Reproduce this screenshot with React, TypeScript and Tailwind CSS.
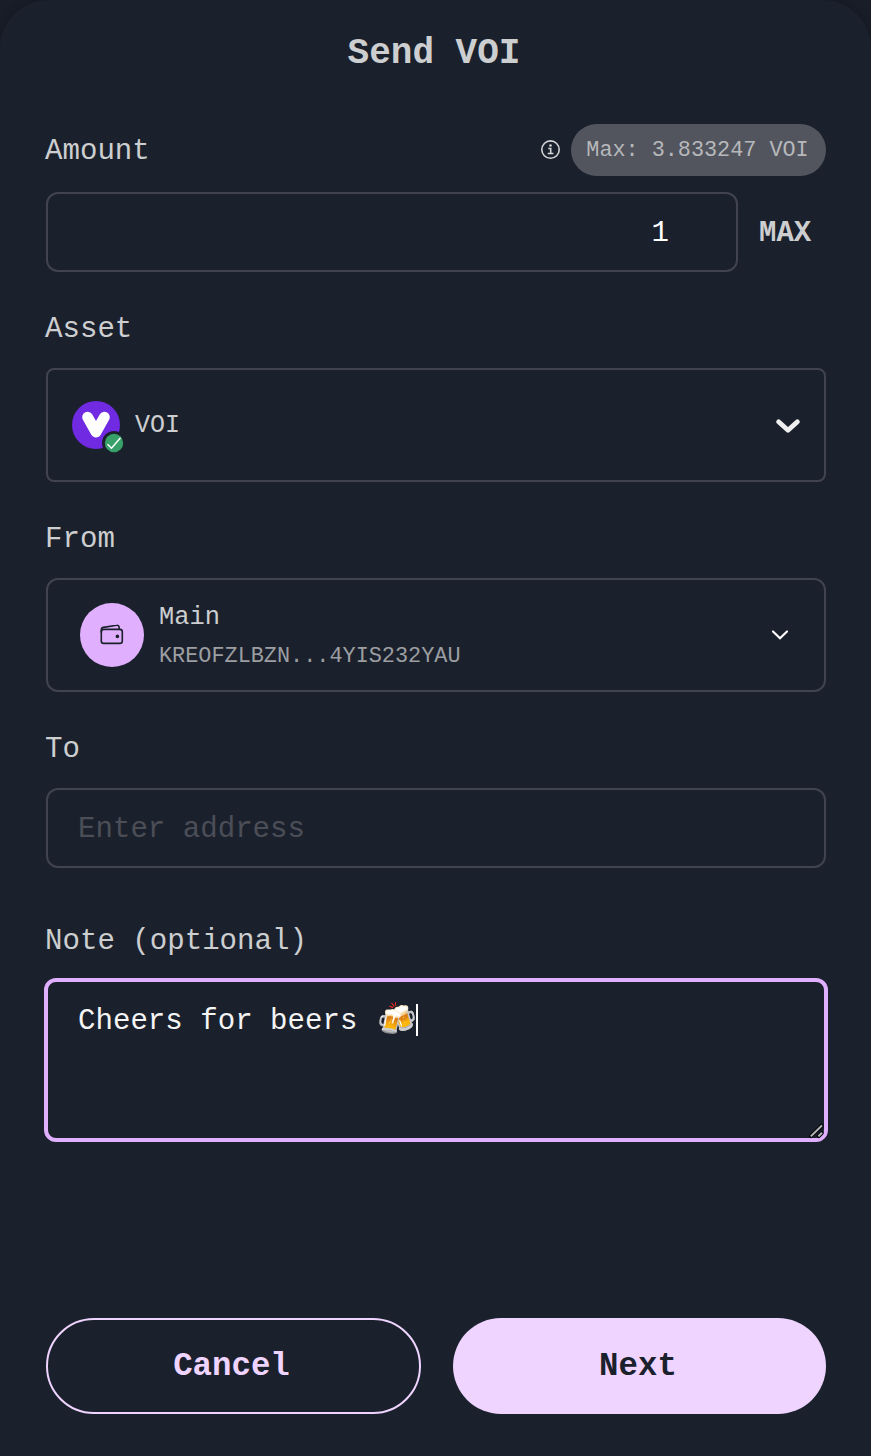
import type { ReactNode } from "react";

function Label({ children }: { children: ReactNode }) {
  return <span className="-ml-px pt-0.5 text-[29.1px] leading-9">{children}</span>;
}

function VoiLogo() {
  return (
    <svg className="size-12 shrink-0 overflow-visible" viewBox="0 0 48 48">
      <circle cx="24" cy="24" r="24" fill="#6f2ae2" />
      <path d="M15.6 16.2 L24 31 L32.4 16.2" fill="none" stroke="#fff" strokeWidth="10.8" strokeLinecap="round" strokeLinejoin="round" />
      <circle cx="42" cy="42" r="12" fill="#1b212c" />
      <circle cx="42" cy="42" r="9.2" fill="#38a169" />
      <path d="M35.5 43.2 L39.5 47.2 L48.5 36.8" fill="none" stroke="#fff" strokeWidth="1.5" />
    </svg>
  );
}

function WalletIcon() {
  return (
    <svg className="size-8" viewBox="0 0 32 32" fill="none" stroke="#1b212c" strokeWidth="1.6" strokeLinejoin="round">
      <rect x="5.3" y="10.4" width="21" height="14" rx="2.4" />
      <path d="M5.3 13.5V11C5.3 9.4 6.1 8.6 7.5 8.4L20.6 6.3C22.1 6 22.8 6.7 23 7.9L23.4 10.4" />
      <circle cx="21.4" cy="17.4" r="1.8" fill="#1b212c" stroke="none" />
    </svg>
  );
}

export default function App() {
  return (
    <div className="h-[1456px] w-[871px] overflow-hidden bg-[#181d28] font-['Liberation_Mono',monospace] text-[#cdced0]">
      <main className="flex h-full flex-col rounded-t-[48px] bg-[#1b212c] pl-[46px] pr-[45px] shadow-[0_0_8px_rgba(0,0,0,0.2)]">
        <h1 className="mt-[31px] -translate-x-0.5 text-center text-[36px] font-bold leading-[46px]">Send VOI</h1>

        <div className="mt-[47px] flex h-[52px] items-center">
          <span className="flex pt-0.5"><Label>Amount</Label></span>
          <svg className="ml-auto mr-[11px] size-5" viewBox="0 0 20 20" fill="none" stroke="#d4d5d7" strokeWidth="1.6">
            <circle cx="10.5" cy="9.6" r="8.7" />
            <path d="M8.3 8.5h2.4v4.9M7.7 13.5h5.7" />
            <circle cx="10.5" cy="5.5" r="1.3" fill="#d4d5d7" stroke="none" />
          </svg>
          <span className="flex h-[52px] w-[255px] items-center justify-center whitespace-nowrap rounded-full bg-[#52555e] pr-0.5 pt-[3px] text-[21.8px] text-[#b7b8bb]">
            Max: 3.833247 VOI
          </span>
        </div>

        <div className="mt-4 flex items-center">
          <div className="flex h-20 w-[692px] items-center justify-end rounded-xl border-2 border-[#41444f] pr-[67px] pt-1 text-[29.1px] text-white">1</div>
          <span className="ml-[21px] pt-1 text-[29px] font-bold">MAX</span>
        </div>

        <div className="mt-[38px] flex h-9"><Label>Asset</Label></div>
        <div className="mt-[22px] flex h-[114px] items-center rounded-lg border-2 border-[#41444f] pl-6 pr-[23px]">
          <VoiLogo />
          <span className="ml-[15px] pt-0.5 text-[25px]">VOI</span>
          <svg className="ml-auto h-4 w-[26px] overflow-visible" viewBox="0 0 26 16" fill="none" stroke="#efefef" strokeWidth="4.8" strokeLinecap="round" strokeLinejoin="round">
            <path d="M3.6 4.8 L13 13.2 L22.4 4.8" />
          </svg>
        </div>

        <div className="mt-[38px] flex h-9"><Label>From</Label></div>
        <div className="mt-[22px] flex h-[114px] items-center rounded-xl border-2 border-[#41444f] pl-8 pr-[35px]">
          <span className="flex size-16 shrink-0 items-center justify-center rounded-full bg-[#e0b0ff]">
            <WalletIcon />
          </span>
          <span className="ml-[15px] flex flex-col pt-1">
            <span className="text-[25.4px] leading-[39px]">Main</span>
            <span className="text-[21.85px] leading-[39px] text-[#9c9ea2]">KREOFZLBZN...4YIS232YAU</span>
          </span>
          <svg className="ml-auto h-3 w-[18px]" viewBox="0 0 18 12" fill="none" stroke="#fff" strokeWidth="2.1" strokeLinecap="round">
            <path d="M2 2.4 L9 9.2 L16 2.4" />
          </svg>
        </div>

        <div className="mt-[38px] flex h-9"><Label>To</Label></div>
        <div className="mt-[22px] flex h-20 items-center rounded-xl border-2 border-[#41444f] pl-[30px] pt-1 text-[29.1px] text-[#4b4e57]">Enter address</div>

        <div className="mt-[54px] flex h-9"><Label>Note (optional)</Label></div>
        <div className="-mx-0.5 mt-5 flex h-[164px] items-end justify-between rounded-xl border-4 border-[#e0b0ff]">
          <div className="flex h-full items-start pl-[30px] pt-[22px] text-[29.1px] leading-9 text-[#f4f4f4]">
            <span className="whitespace-pre">Cheers for beers </span>
            <span className="ml-0.5 w-[39px] text-[32px] leading-9">🍻</span>
            <span className="h-8 w-0.5 bg-white" />
          </div>
          <svg className="size-4 overflow-visible" viewBox="0 0 16 16" fill="none">
            <path d="M3 14 L13.6 3.8 M10.6 14 L13.6 11" stroke="#090c12" strokeWidth="4.4" strokeLinecap="round" />
            <path d="M2.8 14.4 L14 3.4 M10.4 14.4 L14 10.8" stroke="#b8b8b8" strokeWidth="2" />
          </svg>
        </div>

        <div className="mt-[176px] flex gap-8 text-[32.4px] font-bold">
          <button className="h-24 w-[375px] rounded-full border-2 border-[#efd4ff] pr-1 pt-0.5 text-[#efd4ff]">Cancel</button>
          <button className="h-24 w-[373px] rounded-full bg-[#efd4ff] pr-[3px] pt-0.5 text-[#1b212c]">Next</button>
        </div>
      </main>
    </div>
  );
}
